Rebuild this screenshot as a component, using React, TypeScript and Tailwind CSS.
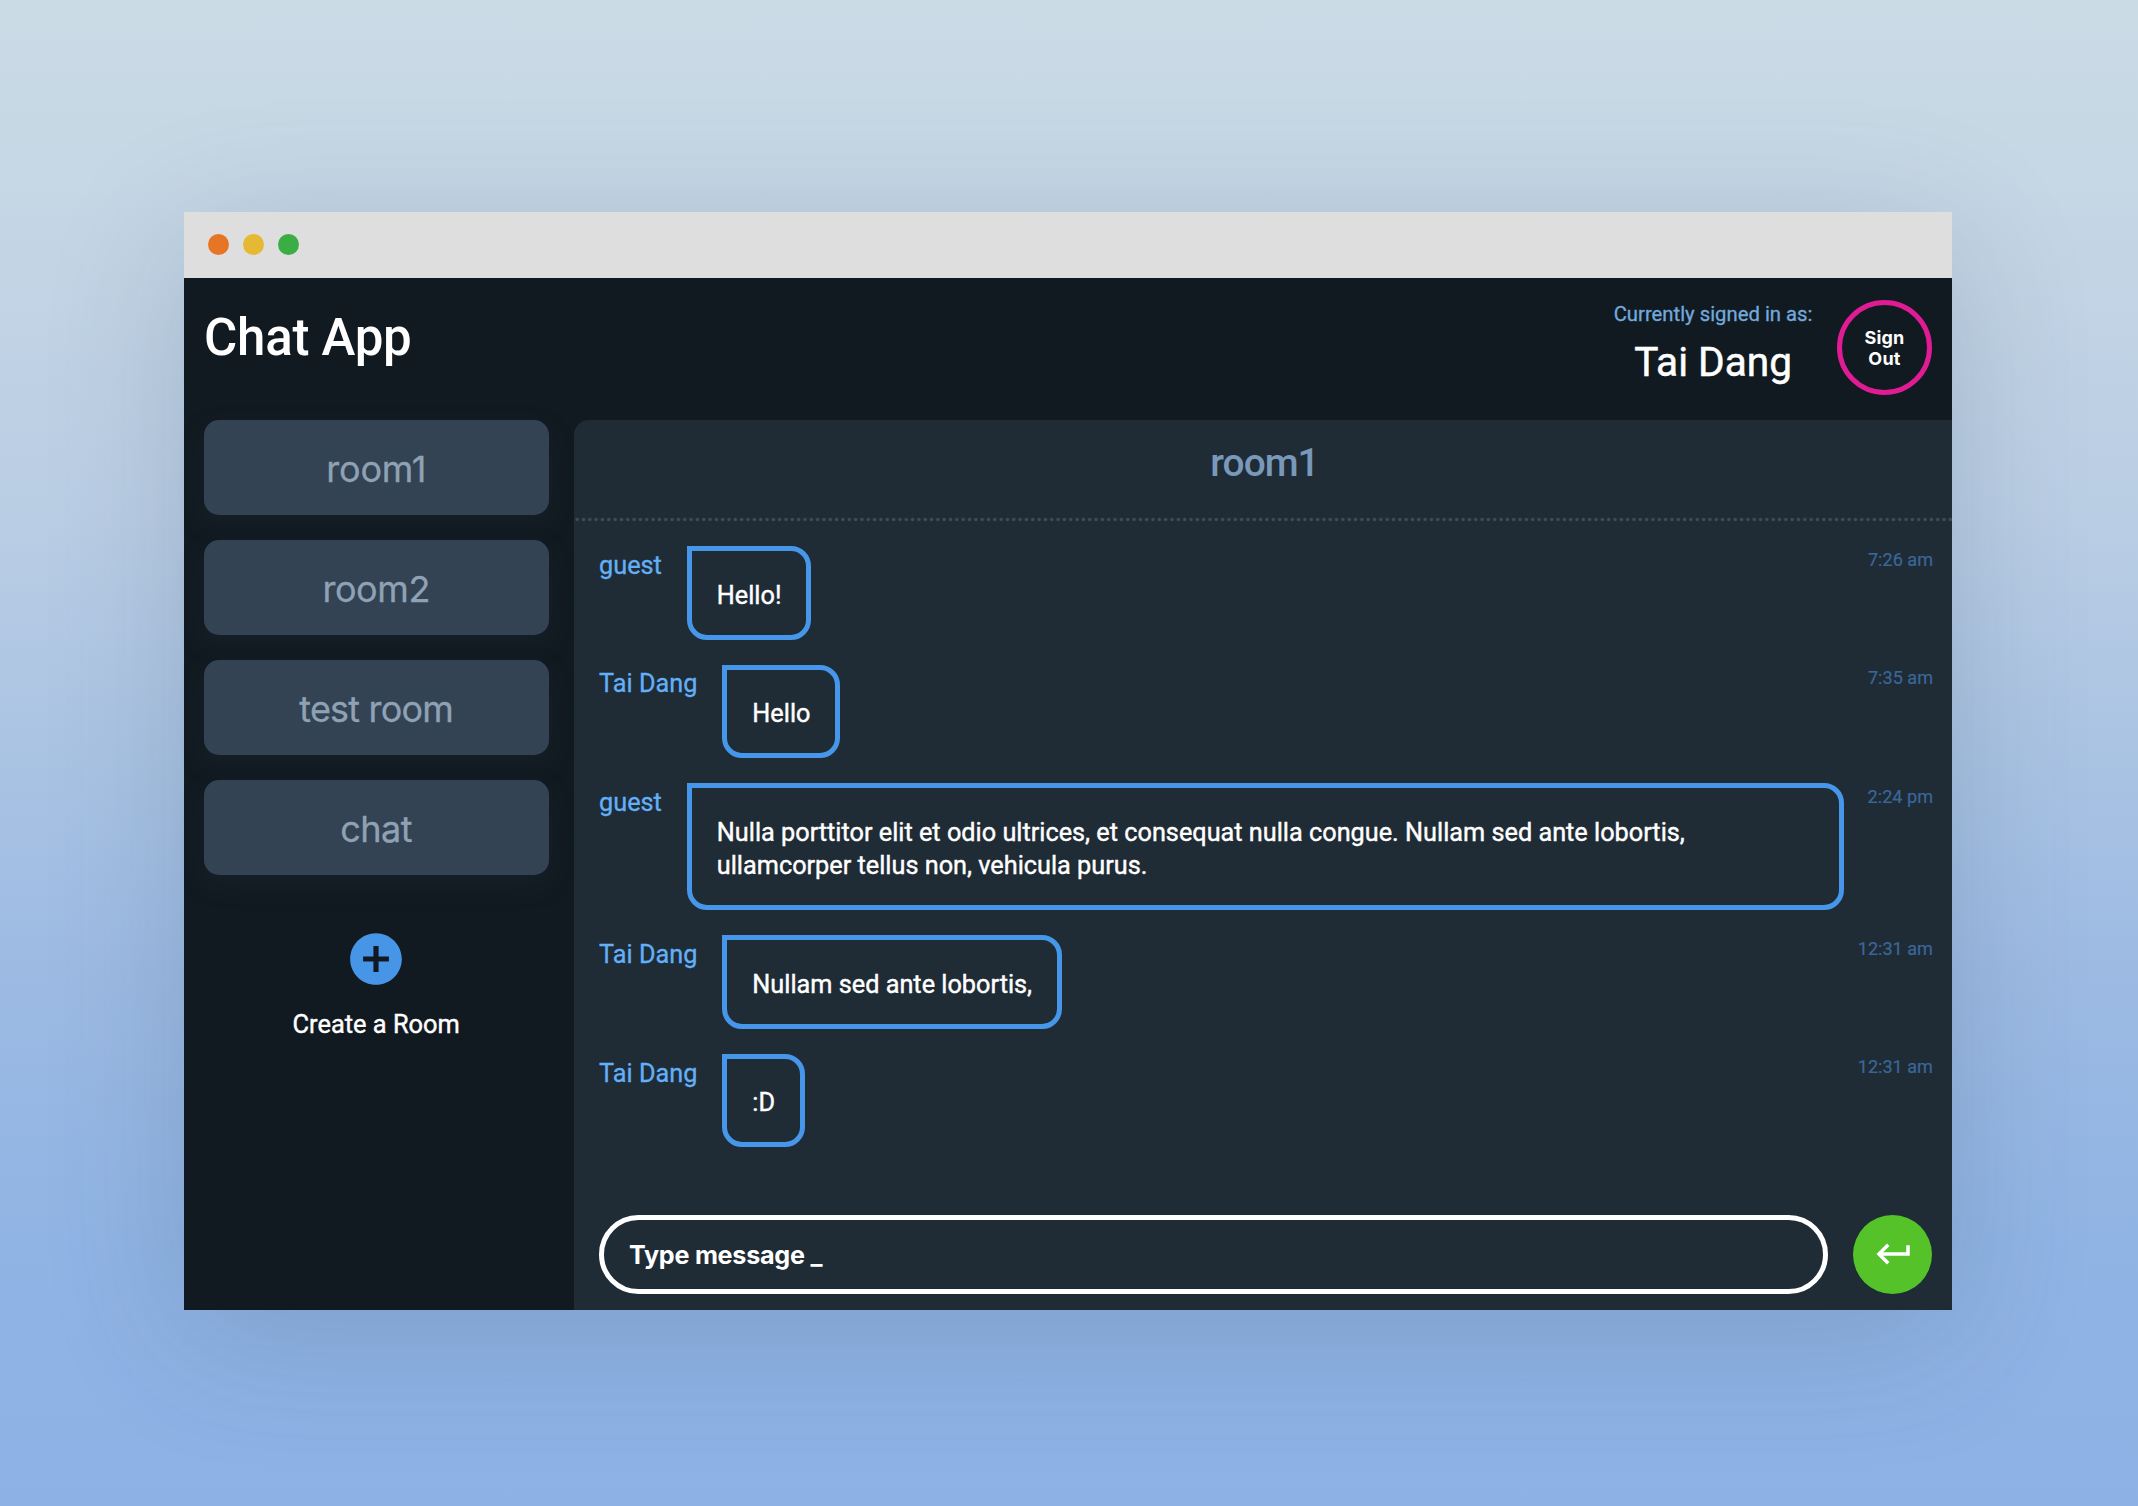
import { MdAddCircle, MdKeyboardReturn } from "react-icons/md";

type Room = { name: string; tracking: string };
type Message = { author: string; text: string; time: string };

const rooms: Room[] = [
  { name: "room1", tracking: "tracking-[-0.2px]" },
  { name: "room2", tracking: "tracking-[-0.4px]" },
  { name: "test room", tracking: "tracking-[-0.8px]" },
  { name: "chat", tracking: "tracking-[-0.5px]" },
];

const messages: Message[] = [
  { author: "guest", text: "Hello!", time: "7:26 am" },
  { author: "Tai Dang", text: "Hello", time: "7:35 am" },
  {
    author: "guest",
    text: "Nulla porttitor elit et odio ultrices, et consequat nulla congue. Nullam sed ante lobortis, ullamcorper tellus non, vehicula purus.",
    time: "2:24 pm",
  },
  { author: "Tai Dang", text: "Nullam sed ante lobortis,", time: "12:31 am" },
  { author: "Tai Dang", text: ":D", time: "12:31 am" },
];

function TitleBar() {
  return (
    <div className="flex h-[66px] shrink-0 items-center gap-[14px] bg-[#dedede] pb-px pl-6">
      <span className="size-[21px] rounded-full bg-[#e67525]" />
      <span className="size-[21px] rounded-full bg-[#e6b935]" />
      <span className="size-[21px] rounded-full bg-[#3bad45]" />
    </div>
  );
}

function Header() {
  return (
    <header className="flex h-[142px] shrink-0 items-start justify-between pr-5 pl-5">
      <h1 className="pt-[29.6px] text-[51px] leading-[60px] font-medium tracking-[-0.25px] text-white">Chat App</h1>
      <div className="flex gap-[24.5px]">
        <div className="pt-[23.7px] text-center">
          <p className="text-[20.3px] leading-6 text-[#72a9dd] [-webkit-text-stroke:0.3px]">Currently signed in as:</p>
          <p className="mt-[12.3px] text-[40.6px] leading-[48px] text-white [-webkit-text-stroke:0.5px]">Tai Dang</p>
        </div>
        <button className="mt-[21.7px] flex size-[95px] items-center justify-center rounded-full border-[5px] border-[#e01b94] pt-[3px] text-center font-[Inter,sans-serif] text-[18px] leading-[20.7px] font-bold tracking-[0.2px] text-white">
          Sign
          <br />
          Out
        </button>
      </div>
    </header>
  );
}

function Sidebar() {
  return (
    <aside className="flex w-[390px] shrink-0 flex-col items-center pr-[25.3px] pl-[19.7px]">
      <ul className="flex w-full flex-col gap-[25.1px]">
        {rooms.map((room) => (
          <li
            key={room.name}
            className={`flex h-[95px] items-center justify-center rounded-[15px] bg-[#334353] pt-[2px] font-[Inter,sans-serif] text-[36px] text-[#8fa2b5] shadow-[0_10px_25px_rgba(31,45,56,0.28)] [-webkit-text-stroke:0.3px] ${room.tracking}`}
          >
            {room.name}
          </li>
        ))}
      </ul>
      <MdAddCircle className="mt-[52.5px] size-[62px] text-[#4795e6]" />
      <p className="mt-[19.5px] text-[25.4px] leading-[30px] text-white [-webkit-text-stroke:0.4px]">Create a Room</p>
    </aside>
  );
}

function MessageRow({ author, text, time }: Message) {
  return (
    <li className="flex items-start">
      <span className="shrink-0 pt-[2.8px] text-[25.3px] leading-[33px] text-[#63b0f7] [-webkit-text-stroke:0.3px]">
        {author}
      </span>
      <div className="ml-[24.9px] flex min-w-0 flex-1">
        <p className="rounded-[20px] rounded-tl-none border-[5px] border-[#4696ea] pt-[27.5px] pr-[25px] pb-[23.2px] pl-[25px] text-[25.28px] leading-[33px] text-white [-webkit-text-stroke:0.4px]">
          {text}
        </p>
      </div>
      <time className="ml-6 shrink-0 pt-[1.5px] text-[18.1px] leading-6 text-[#3a6798] [-webkit-text-stroke:0.2px]">{time}</time>
    </li>
  );
}

function Composer() {
  return (
    <div className="mt-auto mb-[15.8px] flex h-[79.5px] items-center pr-[19.6px] pl-[25px]">
      <div className="flex h-full flex-1 items-center rounded-full border-[5px] border-white pt-[2px] pl-[25px] font-[Inter,sans-serif] text-[25.2px] font-bold tracking-[-0.27px] text-white">
        Type message _
      </div>
      <button className="ml-[24.8px] flex size-[79.5px] items-center justify-center rounded-full bg-[#55c22a] pl-[2px] text-white">
        <MdKeyboardReturn className="size-[42px]" />
      </button>
    </div>
  );
}

function ChatPanel() {
  return (
    <main className="flex min-w-0 flex-1 flex-col rounded-tl-[15px] bg-[#1f2c36]">
      <h2 className="h-[97px] pt-[19.7px] pl-[3px] text-center text-[38.9px] leading-[46px] font-medium tracking-[-1px] text-[#7998ba]">
        room1
      </h2>
      <div className="h-[5px] bg-[radial-gradient(circle,#3c4d5d_1.2px,transparent_2.2px)] bg-[length:6.34px_5px]" />
      <ul className="mt-6 flex flex-col gap-[25px] pr-[19px] pl-[25px]">
        {messages.map((message, index) => (
          <MessageRow key={index} {...message} />
        ))}
      </ul>
      <Composer />
    </main>
  );
}

export default function App() {
  return (
    <div className="flex h-[1506px] w-[2138px] items-start overflow-hidden bg-[linear-gradient(180deg,#cadbe6_0%,#c6d7e5_12%,#b9cde4_35%,#a8c2e3_52%,#9cbae3_65%,#90b4e4_83%,#8db1e4_100%)] pt-[212px] pl-[184px] font-[Roboto,sans-serif]">
      <div className="flex h-[1098px] w-[1768px] flex-col bg-[#121a21] shadow-[0_25px_130px_rgba(50,75,100,0.2)]">
        <TitleBar />
        <Header />
        <div className="flex flex-1">
          <Sidebar />
          <ChatPanel />
        </div>
      </div>
    </div>
  );
}
